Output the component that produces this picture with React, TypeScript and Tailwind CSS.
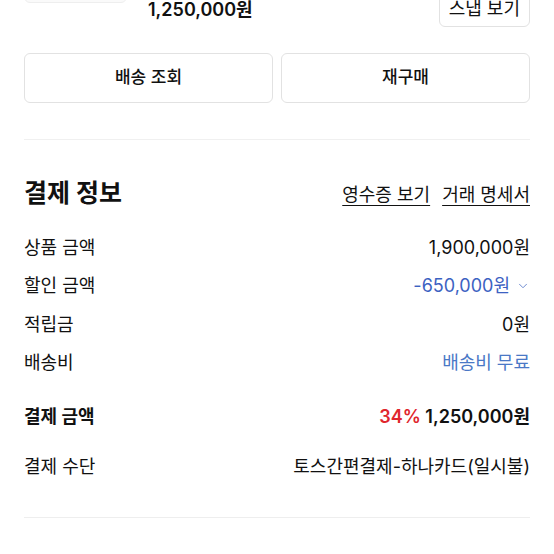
import React from 'react';
import { ChevronDown } from 'lucide-react';

const font = { fontFamily: 'Inter, "Noto Sans CJK KR", sans-serif' };

const rows = [
  { label: '상품 금액', value: '1,900,000원', tone: 'text-[#111111]' },
  { label: '할인 금액', value: '-650,000원', tone: 'text-[#3c62c2]', chevron: true },
  { label: '적립금', value: '0원', tone: 'text-[#111111]' },
  { label: '배송비', value: '배송비 무료', tone: 'text-[#4a78c6]' },
];

const App: React.FC = () => {
  return (
    <div
      className="w-[554px] h-[554px] overflow-hidden bg-white px-6 text-[#111111]"
      style={font}
    >
      {/* Product summary (cut off at top) */}
      <div className="flex items-start -mt-[60px] h-[87px]">
        <div className="w-[103px] h-[63px] rounded-md border border-[#eeeeee] bg-[#fafafa]" />
        <div className="ml-[21px] mt-[58px] text-[18px] leading-6 font-semibold">
          1,250,000원
        </div>
        <button className="ml-auto mt-[51px] h-[36px] px-[9px] rounded-md border border-[#e2e2e2] text-[18px] leading-6">
          스냅 보기
        </button>
      </div>

      {/* Action buttons */}
      <div className="mt-[26px] grid grid-cols-2 gap-2">
        <button className="h-[50px] rounded-md border border-[#e2e2e2] text-[17px] font-medium">
          배송 조회
        </button>
        <button className="h-[50px] rounded-md border border-[#e2e2e2] text-[17px] font-medium">
          재구매
        </button>
      </div>

      <div className="mt-[36px] h-px bg-[#f0f0f0]" />

      {/* Payment info */}
      <div className="mt-[38px] flex items-center justify-between h-8">
        <h2 className="text-[25px] font-bold">결제 정보</h2>
        <div className="flex gap-3 text-[18px]">
          <span className="underline underline-offset-4">영수증 보기</span>
          <span className="underline underline-offset-4">거래 명세서</span>
        </div>
      </div>

      <div className="mt-[18px]">
        {rows.map((row) => (
          <div
            key={row.label}
            className="h-[38.5px] flex items-center justify-between text-[18px]"
          >
            <span>{row.label}</span>
            <span className={`flex items-center gap-[6px] ${row.tone}`}>
              {row.value}
              {row.chevron && (
                <ChevronDown className="w-[14px] h-[14px] text-[#5b7bc9]" strokeWidth={1.5} />
              )}
            </span>
          </div>
        ))}
      </div>

      <div className="mt-[15px] h-[38px] flex items-center justify-between text-[18px]">
        <span className="font-bold">결제 금액</span>
        <span className="font-semibold">
          <span className="text-[#e0262d]">34%</span> 1,250,000원
        </span>
      </div>

      <div className="mt-3 h-[38px] flex items-center justify-between text-[18px]">
        <span>결제 수단</span>
        <span>토스간편결제-하나카드(일시불)</span>
      </div>

      <div className="mt-[32px] h-px bg-[#eeeeee]" />
    </div>
  );
};

export default App;
